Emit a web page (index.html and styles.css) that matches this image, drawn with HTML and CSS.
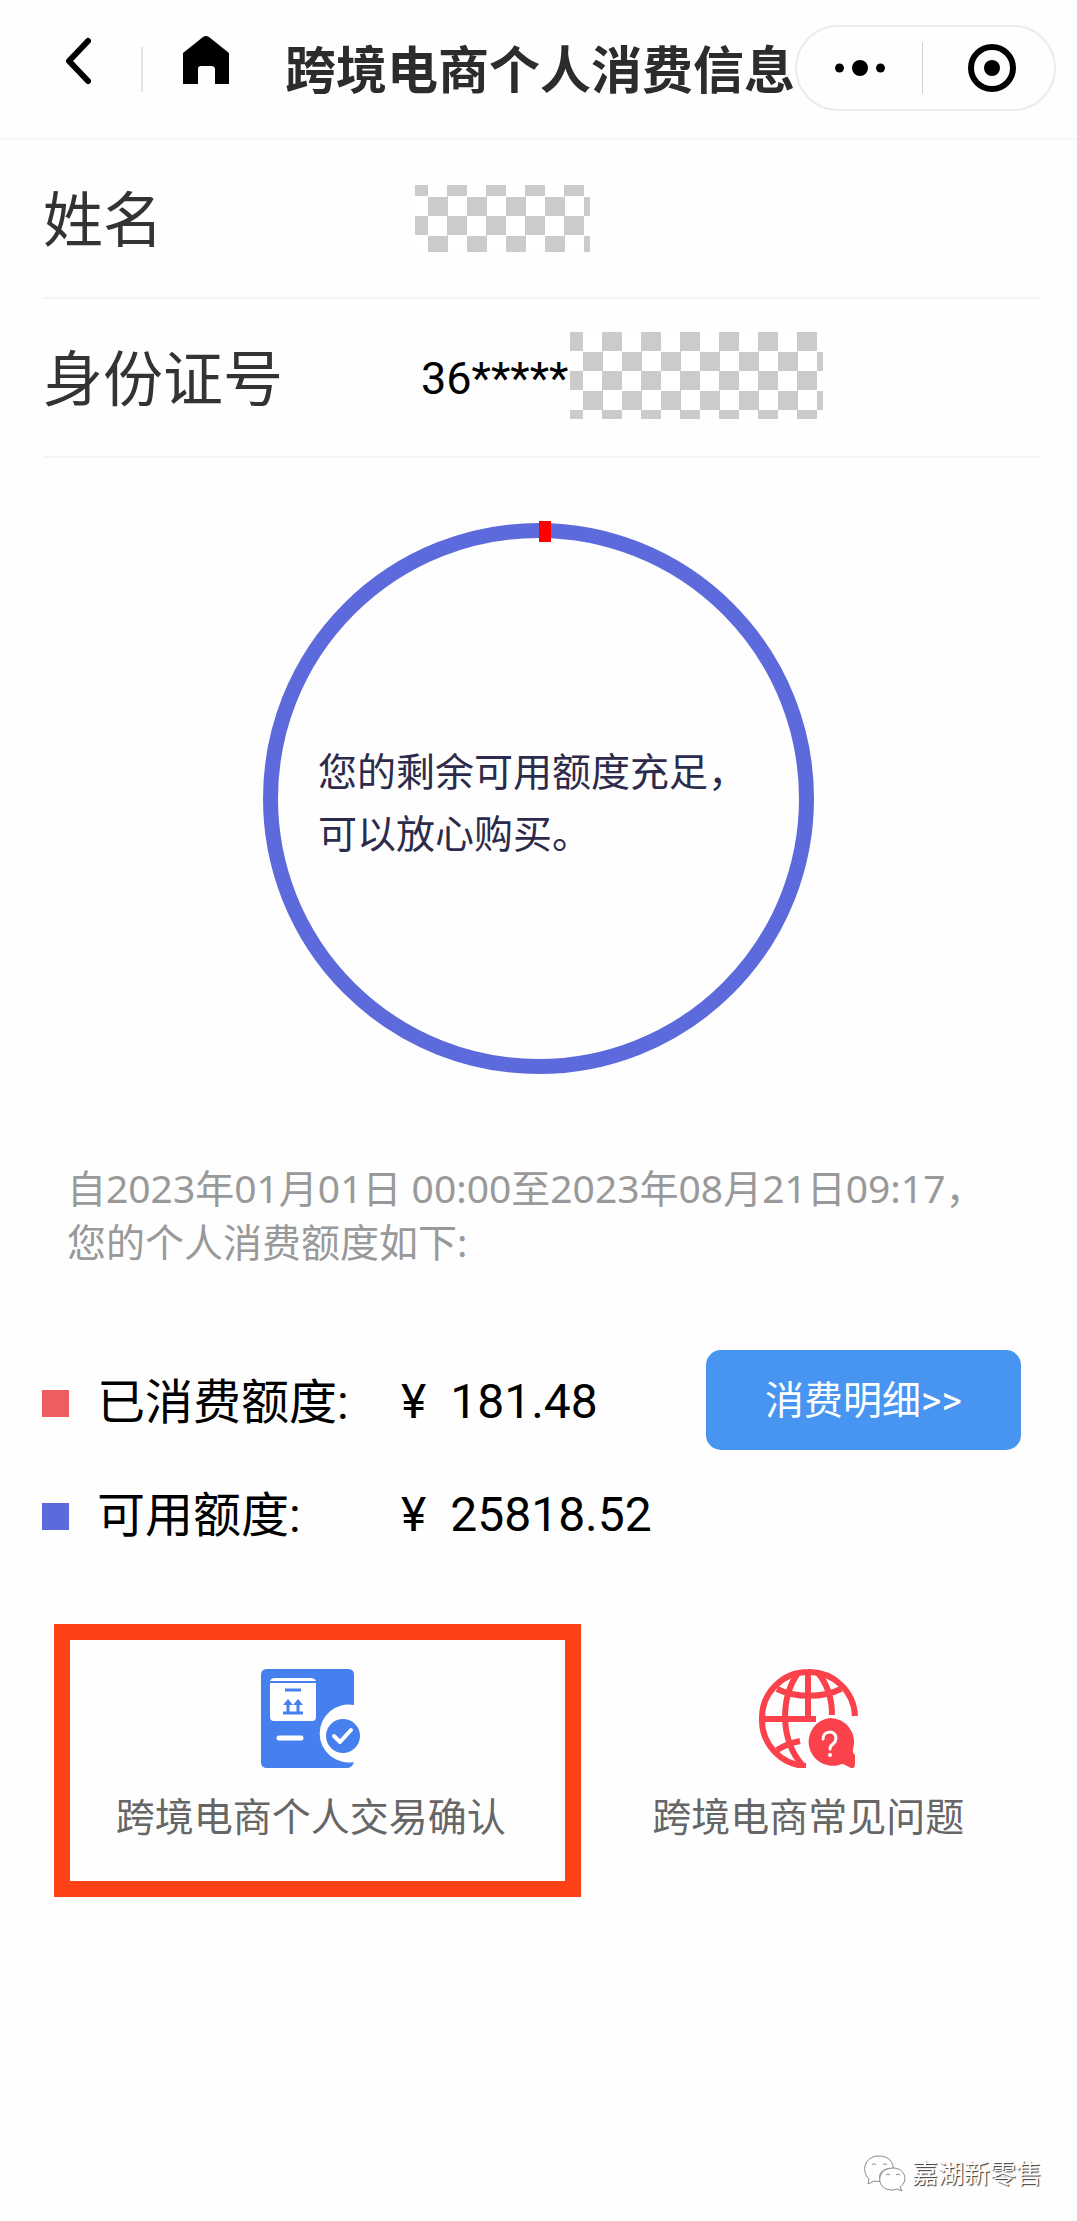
FILE: index.html
```html
<!DOCTYPE html>
<html lang="zh-CN">
<head>
<meta charset="utf-8">
<meta name="viewport" content="width=device-width, initial-scale=1">
<title>跨境电商个人消费信息</title>
<link rel="stylesheet" href="styles.css">
</head>
<body>
<header class="topbar">
  <button class="icon-button" type="button" aria-label="返回">
    <svg width="26" height="64" viewBox="0 0 26 64" fill="none" stroke="#000" stroke-width="6" stroke-linecap="round" stroke-linejoin="round"><path d="M23 4 4 24 23 44"/></svg>
  </button>
  <span class="topbar-divider"></span>
  <button class="icon-button home" type="button" aria-label="首页">
    <svg width="46" height="68" viewBox="0 0 46 68"><path d="M20 2Q23 0 26 2L46 18V49H32V34Q32 31 28 31H18Q15 31 15 34V49H0V18Z"/></svg>
  </button>
  <h1 class="title">跨境电商个人消费信息</h1>
  <div class="capsule">
    <button class="capsule-button" type="button" aria-label="更多">
      <svg width="52" height="18" viewBox="0 0 52 18"><circle cx="5.500" cy="9" r="4.500"/><circle cx="26" cy="9" r="8"/><circle cx="46.500" cy="9" r="4.500"/></svg>
    </button>
    <span class="capsule-divider"></span>
    <button class="capsule-button capsule-close" type="button" aria-label="关闭">
      <svg width="48" height="48" viewBox="0 0 48 48"><circle cx="24" cy="24" r="21" fill="none" stroke="#000" stroke-width="6"/><circle cx="24" cy="24" r="8"/></svg>
    </button>
  </div>
</header>

<main>
  <dl class="profile">
    <div class="profile-row">
      <dt>姓名</dt>
      <dd><span class="mosaic mosaic-name"></span></dd>
    </div>
    <div class="profile-row">
      <dt>身份证号</dt>
      <dd><span class="id-number">36*****</span><span class="mosaic mosaic-id"></span></dd>
    </div>
  </dl>

  <section class="ring">
    <p class="ring-text">您的剩余可用额度充足，<br>可以放心购买。</p>
  </section>

  <p class="period">自2023年01月01日 00:00至2023年08月21日09:17，<br>您的个人消费额度如下:</p>

  <section class="quota">
    <div class="quota-row">
      <span class="swatch swatch-used"></span>
      <span class="quota-label">已消费额度:</span>
      <span class="amount"><span>¥</span><span>181.48</span></span>
      <button class="detail-button" type="button">消费明细&gt;&gt;</button>
    </div>
    <div class="quota-row">
      <span class="swatch swatch-left"></span>
      <span class="quota-label">可用额度:</span>
      <span class="amount"><span>¥</span><span>25818.52</span></span>
    </div>
  </section>

  <nav class="actions">
    <a class="action action-marked" href="#confirm">
      <svg width="99" height="99" viewBox="0 0 99 99">
        <path fill="#467fee" d="M6 0H87Q93 0 93 6V36A29 29 0 1 0 93 93Q91 99 86 99H6Q0 99 0 93V6Q0 0 6 0Z"/>
        <path fill="#fff" d="M14 9H49Q54 9 55 12H9Q10 9 14 9ZM9 14H55V48Q55 52 51 52H13Q9 52 9 48Z"/>
        <path fill="none" stroke="#467fee" stroke-width="3" d="M24 21H40M22 44H42M27 43V34M37 43V34"/>
        <path fill="#467fee" d="M22 36 27 30 32 36 37 30 42 36Z"/>
        <path stroke="#fff" stroke-width="5" stroke-linecap="round" d="M18 69H40"/>
        <circle cx="82" cy="67" r="17" fill="#467fee"/>
        <path fill="none" stroke="#fff" stroke-width="4" stroke-linecap="round" stroke-linejoin="round" d="M73 67 79 73 90 61"/>
      </svg>
      <span>跨境电商个人交易确认</span>
    </a>
    <a class="action" href="#faq">
      <svg width="99" height="99" viewBox="0 0 99 99">
        <g fill="none" stroke="#fb414b" stroke-width="6">
          <path d="M96 47A46 46 0 0 0 49 3A46 46 0 0 0 3 50A46 46 0 0 0 47 97"/>
          <path d="M49 3V48M3 50H57M39 4C22 28 20 70 44 97M59 4C69 16 73 30 73 46M18 20C36 29 64 29 82 20M18 81C26 76 32 74 41 72"/>
        </g>
        <path fill="#fb414b" d="M71 49A24 24 0 1 0 80 96Q84 94 86 96L92 99Q96 100 96 95V86Q93 84 94 80A24 24 0 0 0 71 49Z"/>
        <path fill="none" stroke="#fff" stroke-width="3" stroke-linecap="round" d="M64 70C64 61 77 61 77 69C77 76 71 74 71 80"/>
        <circle cx="71" cy="86" r="2" fill="#fff"/>
      </svg>
      <span>跨境电商常见问题</span>
    </a>
  </nav>
</main>

<footer class="watermark">
  <svg width="42" height="38" viewBox="0 0 42 38" fill="#fff" stroke="#888" stroke-width="1">
    <path d="M5 24C-3 17 0 1 15 1C25 1 30 8 29 14C18 12 13 20 17 26Q13 27 10 26L4 29Z"/>
    <path d="M36 32C45 26 41 13 29 13C12 13 11 35 28 35Q31 35 33 34L38 36Z"/>
    <path fill="none" d="M8 10Q10 7 12 10M19 10Q21 7 23 10M22 20Q24 18 26 20M32 20Q34 18 36 20"/>
  </svg>
  <span>嘉湖新零售</span>
</footer>
</body>
</html>
```
FILE: styles.css
```css
* {
  box-sizing: border-box;
}

body {
  display: flex;
  flex-direction: column;
  min-height: 100vh;
  margin: 0;
  background: #fefefe;
  color: #000;
  font-family: Roboto, "Noto Sans CJK SC", sans-serif;
  font-size: 39px;
}

h1,
p,
dl,
dd {
  margin: 0;
}

button {
  padding: 0;
  border: 0;
  background: none;
  color: inherit;
  font: inherit;
}

svg {
  display: block;
}

.topbar {
  display: flex;
  align-items: center;
  height: 140px;
  padding: 0 21px 0 65px;
  border-bottom: 2px solid #f6f6f6;
}

.topbar-divider {
  width: 3px;
  height: 45px;
  margin: 0 40px 0 50px;
  background: #e4e4e4;
}

.title {
  padding-top: 6px;
  margin-left: 56px;
  color: #2c2c2c;
  font-size: 51px;
  font-weight: 700;
  line-height: 60px;
  white-space: nowrap;
}

.capsule {
  display: flex;
  flex: none;
  align-items: center;
  width: 261px;
  height: 86px;
  margin: 0 0 2px auto;
  border: 2px solid #ebebeb;
  border-radius: 43px;
}

.capsule-button {
  display: flex;
  flex: 1;
  justify-content: center;
}

.capsule-close {
  padding-left: 6px;
}

.capsule-divider {
  width: 1px;
  height: 52px;
  background: #d4d4d4;
}

.profile {
  padding: 0 37px 0 43px;
}

.profile-row {
  display: flex;
  align-items: center;
  height: 159px;
  border-bottom: 2px solid #f4f4f4;
}

.profile-row dt {
  width: 372px;
  padding-top: 6px;
  color: #333;
  font-size: 60px;
  line-height: 72px;
}

.profile-row dd {
  display: flex;
  align-items: center;
}

.id-number {
  padding: 2px 2px 0 6px;
  font-size: 45px;
}

.mosaic {
  background: conic-gradient(#cbcbcb 25%, #fff 0 50%, #cbcbcb 0 75%, #fff 0) 13px 0 / 39px 39px;
}

.mosaic-name {
  width: 175px;
  height: 67px;
  background-position-y: -8px;
}

.mosaic-id {
  width: 253px;
  height: 87px;
  margin-bottom: 4px;
}

.ring {
  position: relative;
  display: flex;
  align-items: center;
  width: 551px;
  height: 551px;
  margin: 65px auto 0;
  padding: 10px 0 0 40px;
  border: 15px solid #5d6adb;
  border-radius: 50%;
}

.ring::before {
  content: "";
  position: absolute;
  top: -17px;
  left: 50%;
  width: 12px;
  height: 21px;
  background: #f00;
}

.ring-text {
  color: #2d2b4b;
  line-height: 62px;
  white-space: nowrap;
}

.period {
  padding: 0 67px;
  margin-top: 87px;
  color: #999;
  font-family: "Noto Sans", "Noto Sans CJK SC", sans-serif;
  line-height: 54px;
}

.quota {
  padding: 0 56px 0 42px;
  margin-top: 81px;
}

.quota-row {
  display: flex;
  align-items: center;
  height: 100px;
  font-size: 48px;
}

.quota-row + .quota-row {
  margin-top: 13px;
}

.swatch {
  width: 27px;
  height: 27px;
  margin: 6px 28px 0 0;
}

.swatch-used {
  background: #ee5d60;
}

.swatch-left {
  background: #5d6adb;
}

.quota-label {
  width: 304px;
  padding-bottom: 4px;
}

.amount {
  display: flex;
  gap: 24px;
  padding-top: 2px;
}

.detail-button {
  width: 315px;
  height: 100px;
  padding-bottom: 6px;
  margin-left: auto;
  border-radius: 15px;
  background: #4795f1;
  color: #fff;
  font-size: 39px;
}

.actions {
  display: grid;
  grid-template-columns: 1fr 1fr;
  padding: 0 20px 0 62px;
  margin-top: 61px;
}

.action {
  position: relative;
  display: flex;
  flex-direction: column;
  align-items: center;
  gap: 22px;
  padding: 45px 0 51px;
  color: #666;
  line-height: 56px;
  text-decoration: none;
}

.action-marked::after {
  content: "";
  position: absolute;
  inset: 0 -21px 0 -8px;
  border: 16px solid #fe4116;
}

.watermark {
  display: flex;
  align-items: center;
  justify-content: flex-end;
  gap: 6px;
  padding: 0 35px 28px;
  margin-top: auto;
  color: #fff;
  font-size: 26px;
  line-height: 38px;
  text-shadow: 1px 1px 1px #333;
}
```
